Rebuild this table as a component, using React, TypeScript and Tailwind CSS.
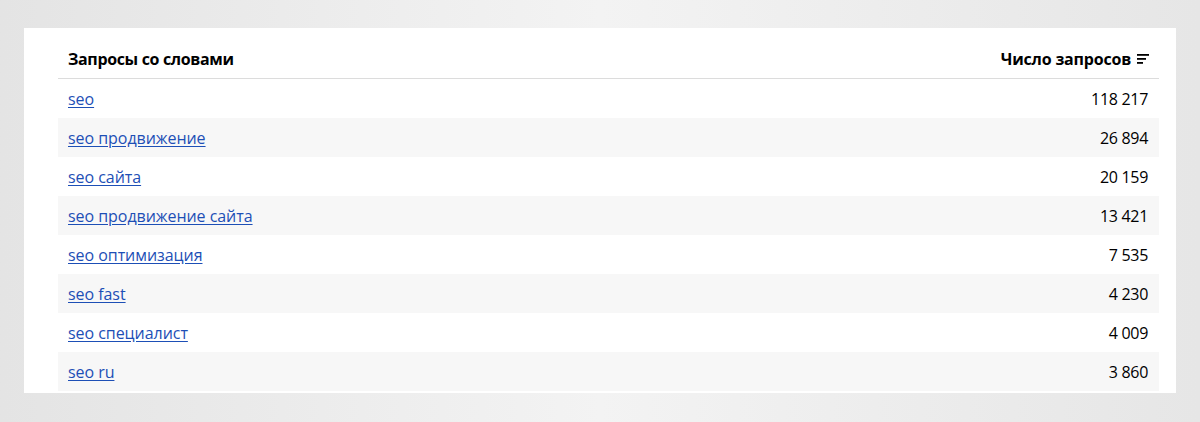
const rows = [
  { query: "seo", count: "118 217" },
  { query: "seo продвижение", count: "26 894" },
  { query: "seo сайта", count: "20 159" },
  { query: "seo продвижение сайта", count: "13 421" },
  { query: "seo оптимизация", count: "7 535" },
  { query: "seo fast", count: "4 230" },
  { query: "seo специалист", count: "4 009" },
  { query: "seo ru", count: "3 860" },
]

function SortIcon() {
  return (
    <svg width="12" height="10" viewBox="0 0 12 10" className="ml-1.5">
      <rect x="0" y="0" width="12" height="1.8" fill="#000" />
      <rect x="0" y="4" width="9" height="1.8" fill="#000" />
      <rect x="0" y="8" width="6" height="1.8" fill="#000" />
    </svg>
  )
}

export default function App() {
  return (
    <div
      className="h-[422px] w-[1200px] bg-gradient-to-r from-[#e4e4e4] via-[#f3f3f3] to-[#e6e6e6] pt-[28px]"
      style={{ fontFamily: '"Open Sans", "Noto Sans", sans-serif' }}
    >
      <div className="ml-[24px] w-[1152px] bg-white pb-[2px] pl-[34px] pr-[17px]">
        <div className="flex items-center justify-between border-b border-[#dcdcdc] px-[10px] pb-[9px] pt-[21px]">
          <span className="text-[16px] font-bold leading-[20px] tracking-[-0.35px] text-black">Запросы со словами</span>
          <span className="flex items-center text-[16px] font-bold leading-[20px] tracking-[-0.2px] text-black">
            Число запросов
            <SortIcon />
          </span>
        </div>
        {rows.map((row, i) => (
          <div
            key={row.query}
            className={`flex h-[39px] items-center justify-between pl-[10px] pr-[11px] ${i % 2 === 1 ? "bg-[#f7f7f7]" : "bg-white"}`}
          >
            <a href="#" className="text-[16px] leading-[20px] tracking-[-0.05px] text-[#1d4fb6] underline underline-offset-[1.5px]">
              {row.query}
            </a>
            <span className="text-[16px] leading-[20px] tracking-[-0.3px] text-black">{row.count}</span>
          </div>
        ))}
      </div>
    </div>
  )
}
